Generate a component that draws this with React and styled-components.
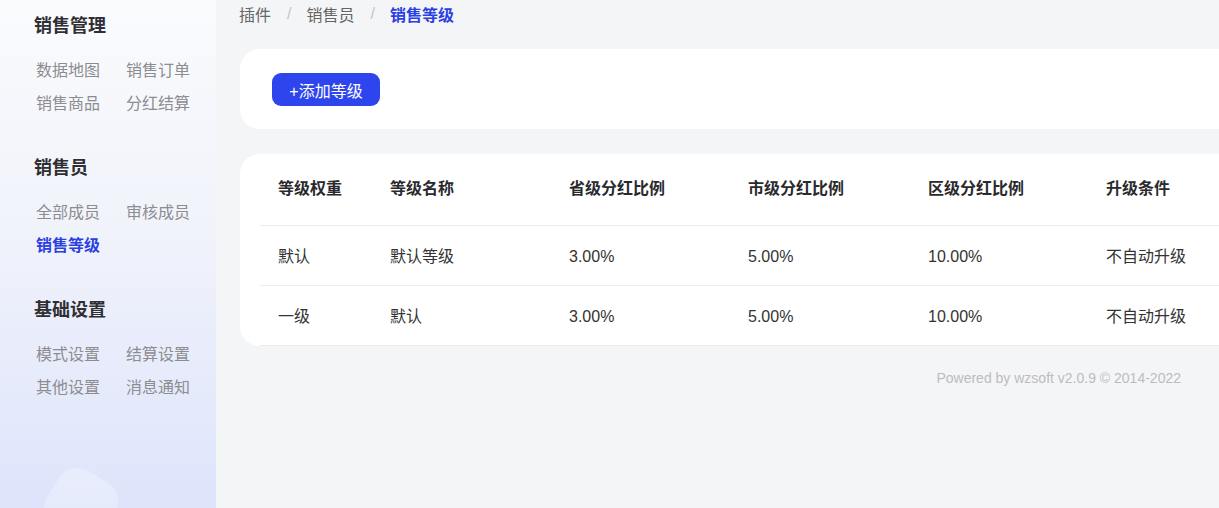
import React from "react";
import styled, { createGlobalStyle } from "styled-components";

const Global = createGlobalStyle`
  html, body { margin: 0; padding: 0; }
  body {
    width: 1219px;
    height: 508px;
    overflow: hidden;
    background: #f4f5f7;
    font-family: "Liberation Sans", "Noto Sans CJK SC", sans-serif;
    color: #333;
  }
`;

const Page = styled.div`
  display: flex;
  height: 508px;
  width: 1219px;
  overflow: hidden;
`;

const Sidebar = styled.aside`
  position: relative;
  flex: 0 0 216px;
  height: 100%;
  box-sizing: border-box;
  padding: 14px 0 0 34px;
  display: flex;
  flex-direction: column;
  gap: 36px;
  overflow: hidden;
  background: linear-gradient(180deg, #fafbfd 0%, #f1f3fb 45%, #dde4fb 100%);
`;

const Blob = styled.div`
  position: absolute;
  left: 48px;
  top: 472px;
  width: 66px;
  height: 66px;
  border-radius: 22px;
  transform: rotate(32deg);
  background: rgba(255, 255, 255, 0.28);
`;

const Section = styled.div`
  display: flex;
  flex-direction: column;
`;

const SectionTitle = styled.div`
  font-size: 18px;
  font-weight: 700;
  line-height: 24px;
  color: #2f2f33;
  margin-bottom: 16px;
`;

const ItemGrid = styled.div`
  display: grid;
  grid-template-columns: 90px 90px;
  grid-auto-rows: 33px;
  padding-left: 2px;
`;

const Item = styled.div`
  font-size: 16px;
  line-height: 33px;
  white-space: nowrap;
  color: ${(p) => (p.$active ? "#2b40e3" : "#8c8c91")};
  font-weight: ${(p) => (p.$active ? 700 : 400)};
`;

const Main = styled.main`
  flex: 1 1 auto;
  min-width: 0;
  overflow: hidden;
  padding-left: 24px;
  display: flex;
  flex-direction: column;
`;

const Breadcrumb = styled.nav`
  display: flex;
  align-items: center;
  height: 28px;
  font-size: 16px;
  white-space: nowrap;
  margin-left: -1px;
`;

const Crumb = styled.span`
  color: ${(p) => (p.$active ? "#2b40e3" : "#666")};
  font-weight: ${(p) => (p.$active ? 700 : 400)};
`;

const Sep = styled.span`
  color: #c4c4c8;
  margin: 0 15px 0 16px;
`;

const Card = styled.section`
  width: 1200px;
  flex: 0 0 auto;
  background: #fff;
  border-radius: 20px;
  box-sizing: border-box;
`;

const ToolCard = styled(Card)`
  margin-top: 21px;
  height: 80px;
  padding: 24px 32px 0;
`;

const AddButton = styled.button`
  height: 33px;
  width: 108px;
  border: none;
  border-radius: 9px;
  background: #2e45ee;
  color: #fff;
  font-family: inherit;
  font-size: 16px;
  padding: 0;
  cursor: pointer;
`;

const TableCard = styled(Card)`
  margin-top: 25px;
  padding: 0 0 0 20px;
`;

const Row = styled.div`
  display: grid;
  grid-template-columns: 112px 179px 179px 180px 178px 1fr;
  height: ${(p) => (p.$head ? "72px" : "60px")};
  padding: ${(p) => (p.$head ? "0 0 1px" : "2px 0 0")};
  align-items: center;
  border-bottom: 1px solid #ececef;
  box-sizing: border-box;
`;

const Cell = styled.div`
  padding-left: 18px;
  font-size: 16px;
  line-height: 24px;
  white-space: nowrap;
  color: ${(p) => (p.$head ? "#2a2a2e" : "#333")};
  font-weight: ${(p) => (p.$head ? 700 : 400)};
`;

const Footer = styled.footer`
  margin-top: 22px;
  width: 941px;
  text-align: right;
  font-size: 14px;
  line-height: 20px;
  color: #bcbcc0;
  white-space: nowrap;
`;

const menu = [
  { title: "销售管理", items: ["数据地图", "销售订单", "销售商品", "分红结算"] },
  { title: "销售员", items: ["全部成员", "审核成员", "销售等级"] },
  { title: "基础设置", items: ["模式设置", "结算设置", "其他设置", "消息通知"] },
];

const heads = ["等级权重", "等级名称", "省级分红比例", "市级分红比例", "区级分红比例", "升级条件"];
const rows = [
  ["默认", "默认等级", "3.00%", "5.00%", "10.00%", "不自动升级"],
  ["一级", "默认", "3.00%", "5.00%", "10.00%", "不自动升级"],
];

export default function App() {
  return (
    <>
      <Global />
      <Page>
        <Sidebar>
          {menu.map((s) => (
            <Section key={s.title}>
              <SectionTitle>{s.title}</SectionTitle>
              <ItemGrid>
                {s.items.map((it) => (
                  <Item key={it} $active={it === "销售等级"}>
                    {it}
                  </Item>
                ))}
              </ItemGrid>
            </Section>
          ))}
          <Blob />
        </Sidebar>
        <Main>
          <Breadcrumb>
            <Crumb>插件</Crumb>
            <Sep>/</Sep>
            <Crumb>销售员</Crumb>
            <Sep>/</Sep>
            <Crumb $active>销售等级</Crumb>
          </Breadcrumb>
          <ToolCard>
            <AddButton>+添加等级</AddButton>
          </ToolCard>
          <TableCard>
            <Row $head>
              {heads.map((h) => (
                <Cell $head key={h}>
                  {h}
                </Cell>
              ))}
            </Row>
            {rows.map((r, i) => (
              <Row key={i}>
                {r.map((c, j) => (
                  <Cell key={j}>{c}</Cell>
                ))}
              </Row>
            ))}
          </TableCard>
          <Footer>Powered by wzsoft v2.0.9 © 2014-2022</Footer>
        </Main>
      </Page>
    </>
  );
}
